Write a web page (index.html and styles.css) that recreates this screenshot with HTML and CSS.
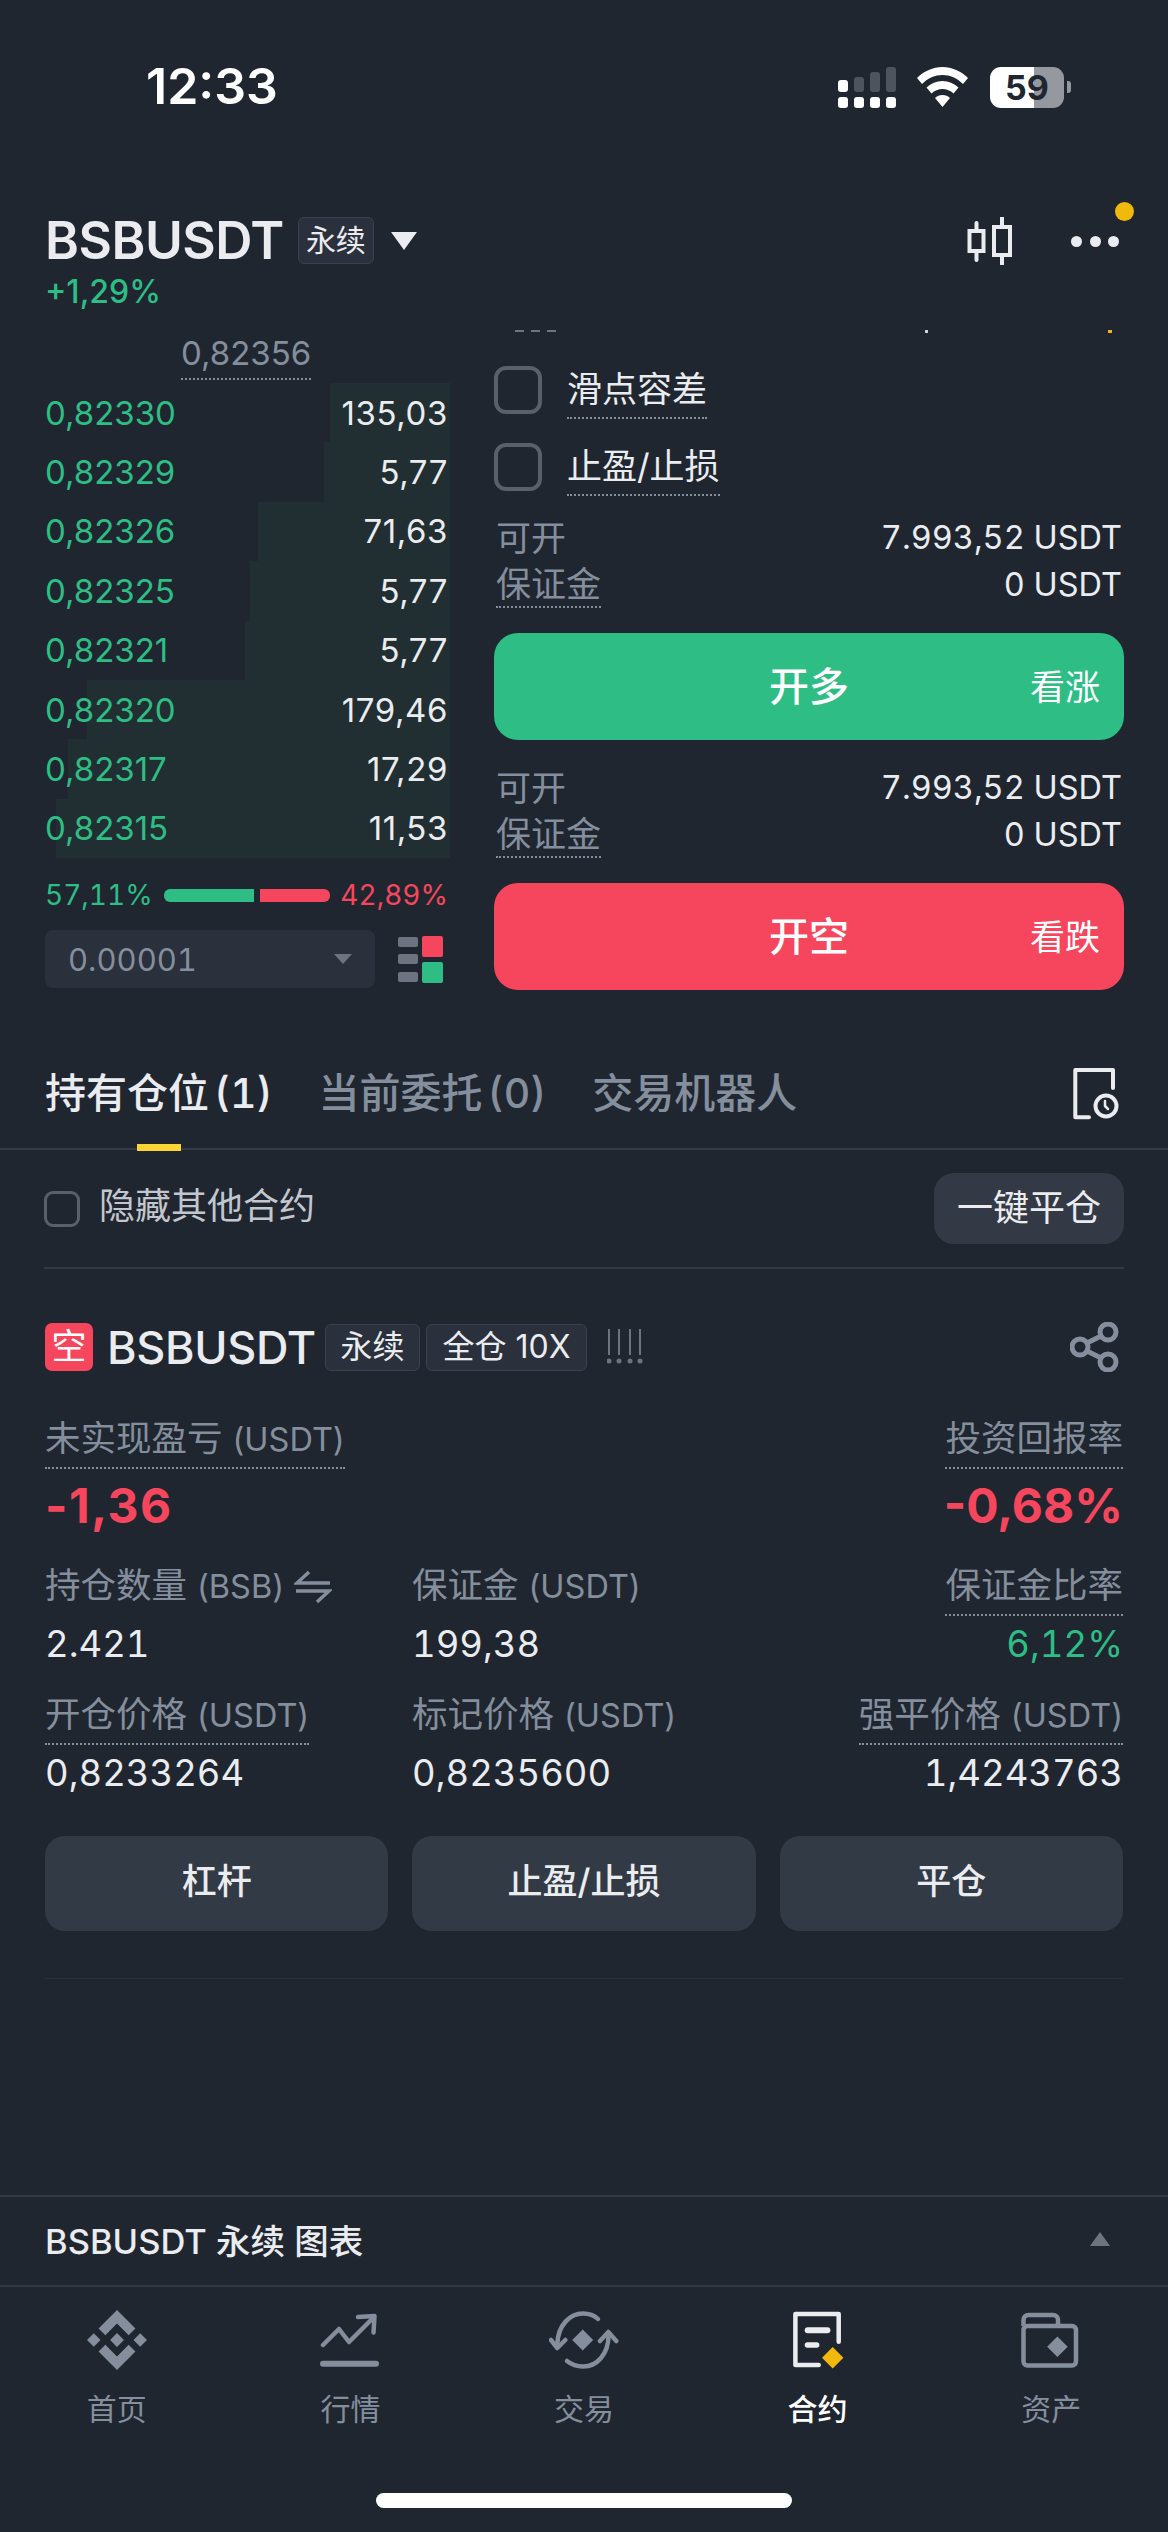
FILE: index.html
```html
<!DOCTYPE html>
<html lang="zh-CN">
<head>
    <meta charset="UTF-8">
    <meta name="viewport" content="width=device-width, initial-scale=1.0">
    <title>BSBUSDT 永续</title>
    <link rel="stylesheet" href="styles.css">
</head>
<body>
<div class="page">
    <div class="status-bar">
        <div class="time">12:33</div>
        <div class="status-icons">
            <div class="signal">
                <div class="signal-top">
                    <i class="on s1"></i><i class="s2"></i><i class="s3"></i><i class="s4"></i>
                </div>
                <div class="signal-low"><i></i><i></i><i></i><i></i></div>
            </div>
            <svg class="wifi" viewBox="0 0 51 40"><path d="M25.500 0C35 0 44 4 51 11l-5 6C40 11 33 8 25.500 8S11 11 5 17l-5-6C7 4 16 0 25.500 0z" fill="#fff"/><path d="M25.500 14c6 0 11.500 2.300 16 6.500l-5 6C33.500 23.500 29.500 22 25.500 22s-8 1.500-11 4.500l-5-6C14 16.300 19.500 14 25.500 14z" fill="#fff"/><path d="M25.500 28c3 0 5.500 1 7.500 3L25.500 40 18 31c2-2 4.500-3 7.500-3z" fill="#fff"/></svg>
            <div class="battery"><span>59</span></div>
            <i class="battery-nub"></i>
        </div>
    </div>

    <div class="market-head">
        <div class="market-title">
            <div class="title-row">
                <h1>BSBUSDT</h1>
                <span class="tag tag-head">永续</span>
                <i class="caret"></i>
            </div>
            <div class="change">+1,29%</div>
        </div>
        <div class="head-icons">
            <svg class="candle" viewBox="0 0 46 48" fill="none" stroke="#eaecef" stroke-width="4" stroke-linecap="round"><rect x="2.500" y="14" width="14" height="20"/><path d="M9.500 6v8M9.500 34v9"/><rect x="27" y="10" width="16" height="28"/><path d="M35 1v9M35 38v9"/></svg>
            <div class="more"><i></i><i></i><i></i><b class="dot-new"></b></div>
        </div>
    </div>

    <div class="trade">
        <div class="book">
            <div class="book-head"><span class="dotted">0,82356</span></div>
            <div class="row"><i class="depth" style="width:120px"></i><span class="bid">0,82330</span><span class="qty">135,03</span></div>
            <div class="row"><i class="depth" style="width:126px"></i><span class="bid">0,82329</span><span class="qty">5,77</span></div>
            <div class="row"><i class="depth" style="width:192px"></i><span class="bid">0,82326</span><span class="qty">71,63</span></div>
            <div class="row"><i class="depth" style="width:200px"></i><span class="bid">0,82325</span><span class="qty">5,77</span></div>
            <div class="row"><i class="depth" style="width:205px"></i><span class="bid">0,82321</span><span class="qty">5,77</span></div>
            <div class="row"><i class="depth" style="width:363px"></i><span class="bid">0,82320</span><span class="qty">179,46</span></div>
            <div class="row"><i class="depth" style="width:382px"></i><span class="bid">0,82317</span><span class="qty">17,29</span></div>
            <div class="row"><i class="depth" style="width:394px"></i><span class="bid">0,82315</span><span class="qty">11,53</span></div>
            <div class="ratio">
                <span class="bid">57,11%</span>
                <div class="ratio-bar"><i class="ratio-buy"></i><i class="ratio-sell"></i></div>
                <span class="ask">42,89%</span>
            </div>
            <div class="book-tools">
                <div class="tick-select"><span>0.00001</span><i></i></div>
                <div class="layout-icon">
                    <div class="layout-lines"><i></i><i></i><i></i></div>
                    <div class="layout-blocks"><i class="red"></i><i class="green"></i></div>
                </div>
            </div>
        </div>

        <div class="order">
            <div class="cut-row"><i class="cut-a"></i><i class="cut-b"></i><i class="cut-c"></i></div>
            <label class="check-row first"><i class="box"></i><span class="dotted">滑点容差</span></label>
            <label class="check-row"><i class="box"></i><span class="dotted">止盈/止损</span></label>
            <div class="info-group">
                <div class="info"><span class="muted">可开</span><span>7.993,52 USDT</span></div>
                <div class="info"><span class="muted dotted">保证金</span><span>0 USDT</span></div>
            </div>
            <div class="big-btn buy"><b>开多</b><span>看涨</span></div>
            <div class="info-group">
                <div class="info"><span class="muted">可开</span><span>7.993,52 USDT</span></div>
                <div class="info"><span class="muted dotted">保证金</span><span>0 USDT</span></div>
            </div>
            <div class="big-btn sell"><b>开空</b><span>看跌</span></div>
        </div>
    </div>

    <div class="tabs">
        <div class="tab active">持有仓位 (1)</div>
        <div class="tab">当前委托 (0)</div>
        <div class="tab">交易机器人</div>
        <svg class="history" viewBox="0 0 48 52" fill="none" stroke="#eaecef" stroke-width="4" stroke-linecap="round" stroke-linejoin="round"><path d="M16 49.300H2.300V2H40v18"/><circle cx="33" cy="38" r="10.500"/><path d="M32 33v5l3 3" stroke-width="2.500"/></svg>
    </div>

    <div class="hide-row">
        <label class="hide-check"><i class="box small"></i><span>隐藏其他合约</span></label>
        <div class="close-all">一键平仓</div>
    </div>

    <div class="position">
        <div class="pos-head">
            <span class="side">空</span>
            <span class="pos-name">BSBUSDT</span>
            <span class="tag tag-pos">永续</span>
            <span class="tag tag-pos tag-wide">全仓 10X</span>
            <svg class="adl" viewBox="0 0 36 36" fill="#6d7480"><rect x="1" y="0" width="2" height="26"/><rect x="11" y="0" width="2" height="26"/><rect x="22" y="0" width="2" height="26"/><rect x="32" y="0" width="2" height="26"/><circle cx="2" cy="32" r="2.500"/><circle cx="12" cy="32" r="2.500"/><circle cx="23" cy="32" r="2.500"/><circle cx="33" cy="32" r="2.500"/></svg>
            <svg class="share" viewBox="0 0 50 50" fill="none" stroke="#848e9c" stroke-width="5"><circle cx="38" cy="10" r="8"/><circle cx="10" cy="25" r="8"/><circle cx="38" cy="40" r="8"/><path d="M17 21l14-7M17 29l14 7"/></svg>
        </div>

        <div class="stats">
            <div class="stat">
                <span class="label dotted">未实现盈亏 <small>(USDT)</small></span>
                <div class="value big pnl ask">-1,36</div>
            </div>
            <div class="stat"></div>
            <div class="stat right">
                <span class="label dotted">投资回报率</span>
                <div class="value big ask">-0,68%</div>
            </div>

            <div class="stat">
                <span class="label">持仓数量 <small>(BSB)</small>
                    <svg class="swap" viewBox="0 0 38 34" fill="none" stroke="#848e9c" stroke-width="3.500"><path d="M36 13H3L15 2"/><path d="M2 21h33L23 32"/></svg>
                </span>
                <div class="value">2.421</div>
            </div>
            <div class="stat">
                <span class="label">保证金 <small>(USDT)</small></span>
                <div class="value">199,38</div>
            </div>
            <div class="stat right">
                <span class="label dotted">保证金比率</span>
                <div class="value bid">6,12%</div>
            </div>

            <div class="stat">
                <span class="label dotted">开仓价格 <small>(USDT)</small></span>
                <div class="value">0,8233264</div>
            </div>
            <div class="stat">
                <span class="label">标记价格 <small>(USDT)</small></span>
                <div class="value">0,8235600</div>
            </div>
            <div class="stat right">
                <span class="label dotted">强平价格 <small>(USDT)</small></span>
                <div class="value">1,4243763</div>
            </div>
        </div>

        <div class="pos-actions">
            <div class="action">杠杆</div>
            <div class="action">止盈/止损</div>
            <div class="action">平仓</div>
        </div>
    </div>

    <div class="spacer"></div>

    <div class="chart-bar">
        <span>BSBUSDT 永续 图表</span>
        <i class="caret-up"></i>
    </div>

    <div class="nav">
        <div class="nav-item">
            <svg viewBox="0 0 126.600 126.600" preserveAspectRatio="none" fill="#848e9c"><path d="M38.730 53.200 63.300 28.640l24.580 24.580 14.300-14.300L63.300 0 24.430 38.900l14.300 14.300zM0 63.310l14.300-14.300 14.300 14.300-14.300 14.300zM38.730 73.410 63.300 97.980l24.580-24.580 14.310 14.290-38.890 38.900-38.880-38.860-.02-.02 14.310-14.300zM97.990 63.310l14.300-14.300 14.300 14.300-14.300 14.300zM77.830 63.300 63.300 48.760 48.770 63.290l14.530 14.530 14.530-14.530z"/></svg>
            <span>首页</span>
        </div>
        <div class="nav-item">
            <svg viewBox="0 0 60 60" fill="none" stroke="#848e9c" stroke-width="4.500" stroke-linecap="round" stroke-linejoin="round"><path d="M3 35l16-16 10 13L52 9"/><path d="M38 7l16.500-1-1 16.500"/><path d="M3 53.700h53" stroke-width="6"/></svg>
            <span>行情</span>
        </div>
        <div class="nav-item">
            <svg class="wide" viewBox="0 0 70 60" fill="none" stroke="#848e9c" stroke-width="4.500" stroke-linecap="round" stroke-linejoin="round"><path d="M8.300 34C9 15 21 3.500 34 3.500c6 0 11 1.500 15 5.500"/><path d="M2 30l6.300 8 8-8"/><path d="M18 51c5 4 10 5.500 16 5.500 14 0 25.500-12.500 25.500-31"/><path d="M51 31l8.300-9 8 9"/><path d="M33.700 19.500l10.500 10.500-10.500 10.500L23.200 30z" fill="#848e9c" stroke="none"/></svg>
            <span>交易</span>
        </div>
        <div class="nav-item current">
            <svg viewBox="0 0 60 60" fill="none"><path d="M30.700 55H7.400V4h43.300v27.700" stroke="#eaecef" stroke-width="4.500" stroke-linecap="round" stroke-linejoin="round"/><rect x="16.700" y="17.300" width="25.700" height="6" rx="3" fill="#eaecef"/><rect x="16.700" y="32.300" width="14.700" height="5.400" rx="2.700" fill="#eaecef"/><path d="M44.700 37l10.700 10.700-10.700 10.700L34 47.700z" fill="#f0b90b"/></svg>
            <span>合约</span>
        </div>
        <div class="nav-item">
            <svg viewBox="0 0 60 60" fill="none" stroke="#848e9c" stroke-width="4.500"><path d="M2.500 16v-6a5 5 0 0 1 5-5H32a5 5 0 0 1 5 5v6"/><rect x="2.500" y="16" width="52.500" height="39.500" rx="4"/><path d="M36.400 26.400l10.300 10.300-10.300 10.300-10.300-10.300z" fill="#848e9c" stroke="none"/></svg>
            <span>资产</span>
        </div>
    </div>

    <div class="home-bar"></div>
</div>
</body>
</html>
```

FILE: styles.css
```css
* {
    box-sizing: border-box;
}
html, body {
    margin: 0;
    background-color: #1f2630;
}
body {
    color: #eaecef;
    font-family: Inter, "Noto Sans CJK SC", sans-serif;
    font-size: 34px;
}
i, b {
    font-style: normal;
    display: block;
}
.page {
    width: 1168px;
    height: 2532px;
    padding-bottom: 24px;
    display: flex;
    flex-direction: column;
    overflow: hidden;
}
.bid { color: #2ebd85; }
.ask { color: #f6465d; }
.muted { color: #848e9c; }
.dotted {
    display: inline-block;
    border-bottom: 2px dotted #848e9c;
}

/* status bar */
.status-bar {
    height: 200px;
    padding: 65px 97px 0 146px;
    display: flex;
    justify-content: space-between;
    align-items: flex-start;
    flex-shrink: 0;
}
.time {
    font-size: 50px;
    font-weight: 600;
    line-height: 42px;
    color: #fff;
}
.status-icons {
    display: flex;
    align-items: center;
    height: 42px;
    margin-top: 1px;
}
.signal {
    width: 58px;
    height: 41px;
    display: flex;
    flex-direction: column;
    justify-content: space-between;
    margin-right: 21px;
}
.signal-top {
    height: 25px;
    display: flex;
    justify-content: space-between;
    align-items: flex-end;
}
.signal-top i {
    width: 10px;
    border-radius: 3px;
    background-color: #4e545e;
}
.signal-top .on { background-color: #fff; height: 12px; }
.signal-top .s2 { height: 15px; }
.signal-top .s3 { height: 20px; }
.signal-top .s4 { height: 25px; }
.signal-low {
    display: flex;
    justify-content: space-between;
}
.signal-low i {
    width: 10px;
    height: 11px;
    border-radius: 3px;
    background-color: #fff;
}
.wifi {
    width: 51px;
    height: 40px;
    margin-right: 22px;
}
.battery {
    width: 74px;
    height: 41px;
    border-radius: 11px;
    background: linear-gradient(90deg, #fff 0, #fff 59%, #95989e 59%, #95989e 100%);
    color: #1f2630;
    font-size: 34px;
    font-weight: 700;
    line-height: 41px;
    text-align: center;
}
.battery-nub {
    width: 4px;
    height: 12px;
    margin-left: 3px;
    border-radius: 0 3px 3px 0;
    background-color: #95989e;
}

/* market header */
.market-head {
    height: 130px;
    padding: 17px 49px 0 45px;
    display: flex;
    justify-content: space-between;
    flex-shrink: 0;
}
.title-row {
    display: flex;
    align-items: center;
    height: 47px;
}
h1 {
    margin: 0;
    font-size: 51.500px;
    font-weight: 600;
    line-height: 47px;
    letter-spacing: -0.5px;
}
.tag {
    border: 1px solid #3a424f;
    border-radius: 6px;
    background-color: #2a313c;
    text-align: center;
}
.tag-head {
    width: 76px;
    height: 47px;
    margin-left: 14px;
    font-size: 30px;
    line-height: 44px;
}
.caret {
    margin-left: 17px;
    width: 0;
    height: 0;
    border-left: 13px solid transparent;
    border-right: 13px solid transparent;
    border-top: 18px solid #eaecef;
}
.change {
    margin-top: 10px;
    font-size: 32px;
    font-weight: 500;
    line-height: 36px;
    color: #2ebd85;
}
.head-icons {
    display: flex;
    align-items: flex-start;
}
.candle {
    width: 46px;
    height: 48px;
}
.more {
    position: relative;
    width: 48px;
    height: 48px;
    margin-left: 58px;
    display: flex;
    justify-content: space-between;
    align-items: center;
}
.more i {
    width: 11px;
    height: 11px;
    border-radius: 50%;
    background-color: #eaecef;
}
.dot-new {
    position: absolute;
    left: 44px;
    top: -15px;
    width: 19px;
    height: 19px;
    border-radius: 50%;
    background-color: #f0b90b;
}

/* order book and order form */
.trade {
    height: 680px;
    padding: 0 44px 0 45px;
    display: flex;
    justify-content: space-between;
    flex-shrink: 0;
}
.book {
    width: 405px;
}
.book-head {
    height: 53px;
    padding: 3px 0 0 136px;
    font-size: 33px;
    line-height: 40px;
    color: #848e9c;
}
.book-head .dotted {
    padding-bottom: 5px;
}
.row {
    position: relative;
    height: 59.400px;
    padding-right: 2px;
    display: flex;
    justify-content: space-between;
    align-items: center;
    font-size: 33px;
}
.row span {
    position: relative;
}
.depth {
    position: absolute;
    top: 0;
    right: 0;
    bottom: 0;
    background-color: #212f33;
}
.qty {
    color: #eaecef;
    letter-spacing: 0.6px;
}
.ratio {
    margin-top: 19px;
    height: 36px;
    display: flex;
    justify-content: space-between;
    align-items: center;
    font-size: 28px;
    font-variant-numeric: tabular-nums;
    padding-right: 2px;
}
.ratio-bar {
    width: 166px;
    height: 13px;
    display: flex;
    justify-content: space-between;
}
.ratio-buy {
    width: 90px;
    border-radius: 6px 0 0 6px;
    background-color: #2ebd85;
}
.ratio-sell {
    width: 70px;
    border-radius: 0 6px 6px 0;
    background-color: #f6465d;
}
.book-tools {
    margin-top: 17px;
    display: flex;
    align-items: center;
}
.tick-select {
    width: 330px;
    height: 58px;
    padding: 0 23px;
    border-radius: 8px;
    background-color: #2a303c;
    display: flex;
    justify-content: space-between;
    align-items: center;
    color: #848e9c;
    font-size: 31px;
    font-variant-numeric: tabular-nums;
}
.tick-select i {
    width: 0;
    height: 0;
    border-left: 9px solid transparent;
    border-right: 9px solid transparent;
    border-top: 10px solid #6d7480;
}
.layout-icon {
    margin-left: 23px;
    display: flex;
    gap: 4px;
}
.layout-lines {
    width: 20px;
    display: flex;
    flex-direction: column;
    justify-content: space-between;
    padding: 1px 0;
}
.layout-lines i {
    height: 10px;
    border-radius: 2px;
    background-color: #6d7480;
}
.layout-blocks i {
    width: 21px;
    height: 21px;
    border-radius: 2px;
}
.layout-blocks .red { background-color: #f6465d; margin-bottom: 5px; }
.layout-blocks .green { background-color: #2ebd85; }

.order {
    width: 630px;
}
.cut-row {
    height: 4px;
    position: relative;
}
.cut-row i {
    position: absolute;
    top: 0;
    height: 3px;
    background-color: #cfd3d9;
}
.cut-a {
    left: 21px;
    width: 48px;
    height: 2px !important;
    opacity: 0.45;
    background: repeating-linear-gradient(90deg, #cfd3d9 0, #cfd3d9 9px, transparent 9px, transparent 16px) !important;
}
.cut-b { left: 431px; width: 3px; }
.cut-c { left: 614px; width: 4px; background-color: #f0b90b !important; }
.check-row {
    margin-top: 30px;
    height: 47px;
    display: flex;
    align-items: center;
    gap: 25px;
    font-size: 35px;
    line-height: 48px;
}
.check-row.first {
    margin-top: 32px;
}
.check-row .dotted {
    margin-top: 4px;
    padding-bottom: 4px;
}
.box {
    width: 48px;
    height: 48px;
    border: 4px solid #5a606b;
    border-radius: 12px;
    flex-shrink: 0;
}
.box.small {
    width: 36px;
    height: 36px;
    border-width: 3px;
    border-radius: 9px;
}
.info-group {
    margin-top: 24px;
}
.info {
    height: 47px;
    display: flex;
    justify-content: space-between;
    align-items: center;
    padding: 0 2px;
    font-size: 32.500px;
    font-variant-numeric: tabular-nums;
}
.info .muted {
    font-size: 35px;
    line-height: 44px;
}
.big-btn {
    position: relative;
    margin-top: 25px;
    height: 107px;
    padding-bottom: 5px;
    border-radius: 24px;
    display: flex;
    justify-content: center;
    align-items: center;
    color: #fff;
}
.big-btn.buy { background-color: #2ebd85; }
.big-btn.sell { background-color: #f6465d; }
.big-btn b {
    font-size: 40px;
    font-weight: 500;
}
.big-btn span {
    position: absolute;
    right: 24px;
    font-size: 35px;
}

/* tabs */
.tabs {
    height: 140px;
    padding: 63px 47px 0 45px;
    border-bottom: 2px solid #333b47;
    display: flex;
    align-items: flex-start;
    gap: 46px;
    flex-shrink: 0;
}
.tab {
    position: relative;
    height: 77px;
    font-size: 41px;
    font-weight: 500;
    font-variant-numeric: tabular-nums;
    word-spacing: -6px;
    line-height: 40px;
    color: #848e9c;
    white-space: nowrap;
}
.tab.active {
    color: #eaecef;
}
.tab.active::after {
    content: "";
    position: absolute;
    left: 50%;
    bottom: -1px;
    width: 44px;
    height: 7px;
    margin-left: -22px;
    background-color: #fcd535;
}
.history {
    width: 48px;
    height: 52px;
    margin-left: auto;
    margin-top: -5px;
}

/* hide row */
.hide-row {
    height: 119px;
    margin: 0 44px;
    border-bottom: 2px solid #333a47;
    display: flex;
    justify-content: space-between;
    align-items: center;
    flex-shrink: 0;
}
.hide-check {
    display: flex;
    align-items: center;
    gap: 19px;
    font-size: 36px;
    line-height: 42px;
    color: #c3c7cd;
}
.hide-check span {
    padding-bottom: 5px;
}
.close-all {
    width: 190px;
    height: 71px;
    border-radius: 20px;
    background-color: #333a45;
    text-align: center;
    font-size: 36px;
    line-height: 71px;
}

/* position card */
.position {
    height: 710px;
    margin: 0 44px;
    padding-top: 54px;
    border-bottom: 1px solid #29303a;
    flex-shrink: 0;
}
.pos-head {
    height: 48px;
    padding-left: 1px;
    display: flex;
    align-items: center;
}
.side {
    width: 48px;
    height: 48px;
    border-radius: 7px;
    background-color: #f6465d;
    color: #fff;
    font-size: 35px;
    line-height: 46px;
    text-align: center;
}
.pos-name {
    margin-left: 14px;
    font-size: 45px;
    font-weight: 500;
    letter-spacing: -0.3px;
}
.tag-pos {
    width: 95px;
    height: 47px;
    margin-left: 9px;
    font-size: 32px;
    line-height: 44px;
}
.tag-wide {
    width: 161px;
    margin-left: 6px;
}
.adl {
    width: 36px;
    height: 36px;
    margin-left: 20px;
}
.share {
    width: 50px;
    height: 50px;
    margin-left: auto;
    margin-right: 4px;
}
.stats {
    margin-top: 47px;
    padding: 0 1px 0 1px;
    display: grid;
    grid-template-columns: 367px 1fr 1fr;
    row-gap: 28px;
}
.stat.right {
    text-align: right;
}
.label {
    display: inline-block;
    height: 48px;
    padding-bottom: 10px;
    border-bottom: 2px solid transparent;
    font-size: 35.500px;
    line-height: 36px;
    color: #848e9c;
    white-space: nowrap;
}
.label small {
    font-size: 32.500px;
}
.label.dotted {
    border-bottom: 2px dotted #848e9c;
}
.swap {
    width: 38px;
    height: 34px;
    vertical-align: -6px;
}
.value {
    margin-top: 6px;
    font-size: 36.500px;
    font-variant-numeric: tabular-nums;
    line-height: 44px;
}
.value.big {
    font-size: 48px;
    font-weight: 700;
    font-variant-numeric: normal;
    line-height: 62px;
}
.value.pnl {
    letter-spacing: 1.5px;
}
.pos-actions {
    margin-top: 41px;
    padding: 0 1px;
    display: grid;
    grid-template-columns: repeat(3, 1fr);
    gap: 24px;
}
.action {
    height: 95px;
    border-radius: 20px;
    background-color: #323a45;
    font-size: 35px;
    font-weight: 500;
    line-height: 91px;
    text-align: center;
}
.spacer {
    flex: 1;
}

/* chart bar and nav */
.chart-bar {
    height: 92px;
    padding: 0 58px 4px 45px;
    border-top: 2px solid #303845;
    border-bottom: 2px solid #303845;
    display: flex;
    justify-content: space-between;
    align-items: center;
    font-size: 34.500px;
    font-weight: 500;
    flex-shrink: 0;
}
.caret-up {
    width: 0;
    height: 0;
    border-left: 10px solid transparent;
    border-right: 10px solid transparent;
    border-bottom: 14px solid #6d7480;
}
.nav {
    padding-top: 23px;
    display: grid;
    grid-template-columns: repeat(5, 1fr);
    flex-shrink: 0;
}
.nav-item {
    display: flex;
    flex-direction: column;
    align-items: center;
    font-size: 30px;
    color: #848e9c;
}
.nav-item svg {
    width: 60px;
    height: 60px;
}
.nav-item svg.wide {
    width: 70px;
}
.nav-item span {
    margin-top: 19px;
    line-height: 40px;
}
.nav-item.current {
    color: #fff;
    font-weight: 500;
}
.home-bar {
    width: 416px;
    height: 15px;
    margin: 64px auto 0;
    border-radius: 8px;
    background-color: #fff;
    flex-shrink: 0;
}
```
